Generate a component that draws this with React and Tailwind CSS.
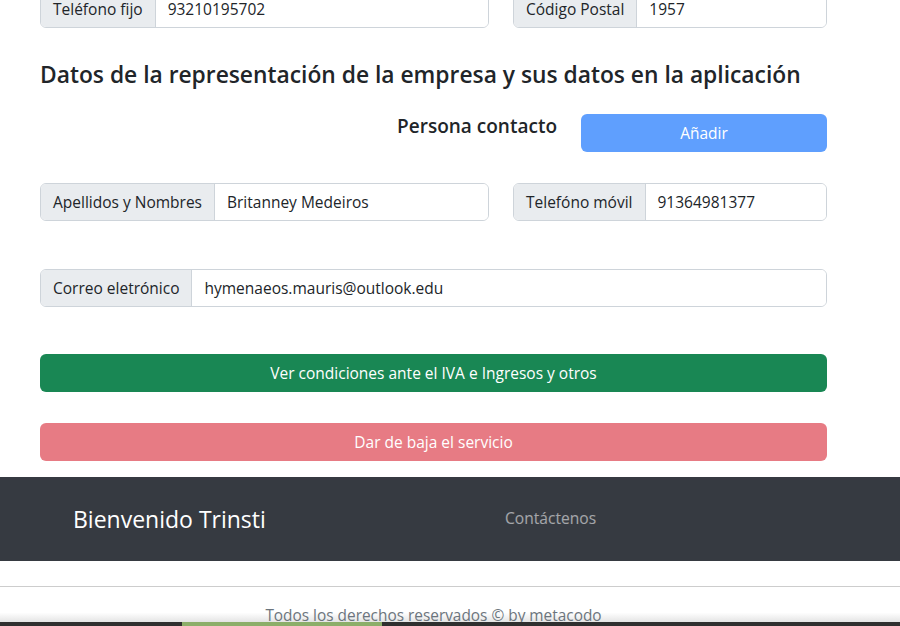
import React from "react";

const font = { fontFamily: '"Open Sans", "Noto Sans", sans-serif' };

function Field({ label, value, className = "" }) {
    return (
        <div className={`flex h-[38px] rounded-[6px] border border-[#ced4da] overflow-hidden text-[15.5px] text-[#212529] ${className}`}>
            <span className="flex items-center px-3 pt-[2px] bg-[#e9ecef] border-r border-[#ced4da] whitespace-nowrap">
                {label}
            </span>
            <div className="flex flex-1 items-center px-3 pt-[2px] bg-white whitespace-nowrap">{value}</div>
        </div>
    );
}

export default function App() {
    return (
        <div className="relative flex h-[626px] w-full flex-col overflow-hidden bg-white" style={font}>
            <div className="ml-[40px] w-[787px]">
                {/* datos de contacto (final de la seccion anterior) */}
                <div className="mt-[-10px] flex gap-[24px]">
                    <Field label="Teléfono fijo" value="93210195702" className="w-[449px]" />
                    <Field label="Código Postal" value="1957" className="w-[314px]" />
                </div>

                <h4 className="mt-[32px] text-[22.8px] leading-[29px] font-semibold text-[#212529]">
                    Datos de la representación de la empresa y sus datos en la aplicación
                </h4>

                <div className="mt-[25px] flex gap-[24px]">
                    <div className="w-[517px] text-right text-[19px] leading-[24px] font-semibold text-[#212529]">
                        Persona contacto
                    </div>
                    <button
                        type="button"
                        disabled
                        className="h-[38px] w-[246px] rounded-[6px] bg-[#5f9ffe] pt-[2px] text-[15.5px] text-white"
                    >
                        Añadir
                    </button>
                </div>

                <div className="mt-[31px] flex gap-[24px]">
                    <Field label="Apellidos y Nombres" value="Britanney Medeiros" className="w-[449px]" />
                    <Field label="Telefóno móvil" value="91364981377" className="w-[314px]" />
                </div>

                <Field
                    label="Correo eletrónico"
                    value="hymenaeos.mauris@outlook.edu"
                    className="mt-[48px] w-full"
                />

                <button
                    type="button"
                    className="mt-[47px] h-[38px] w-full rounded-[6px] bg-[#198754] pt-[2px] text-[15.5px] text-white"
                >
                    Ver condiciones ante el IVA e Ingresos y otros
                </button>

                <button
                    type="button"
                    disabled
                    className="mt-[31px] h-[38px] w-full rounded-[6px] bg-[#e77b84] pt-[2px] text-[15.5px] text-white"
                >
                    Dar de baja el servicio
                </button>
            </div>

            <nav className="mt-[16px] flex h-[84px] items-center bg-[#363a41] pl-[73px]">
                <span className="w-[432px] text-[23px] text-white">Bienvenido Trinsti</span>
                <a className="text-[15.6px] text-white/55">Contáctenos</a>
            </nav>

            <div className="mt-[25px] h-px bg-[#cdcdcd]" />

            <div className="mt-[16px] h-[19px] overflow-hidden bg-gradient-to-b from-white via-white to-[#e4e4e4]">
                <p className="ml-[40px] w-[787px] pt-[1px] text-center text-[15.4px] leading-[24px] text-[#6c757d]">
                    Todos los derechos reservados © by metacodo
                </p>
            </div>

            <div className="h-[4px] bg-[#2f2f2f]">
                <div className="ml-[182px] h-full w-[200px] bg-[#8cae69]" />
            </div>
        </div>
    );
}
